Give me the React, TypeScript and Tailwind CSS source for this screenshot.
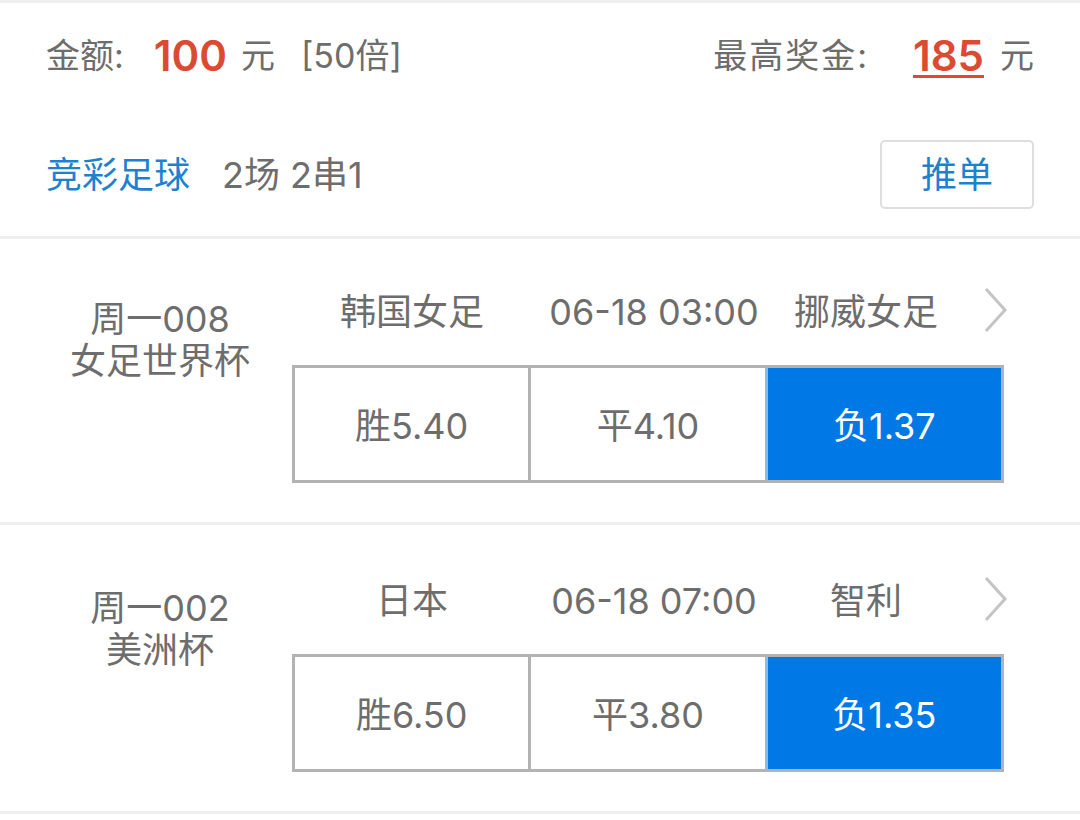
import React from "react";

const FONT = { fontFamily: '"Inter", "Noto Sans CJK SC", sans-serif' };

function Chevron() {
  return (
    <svg width="28" height="48" viewBox="0 0 28 48" className="block">
      <polyline points="4,3 23,24 4,45" fill="none" stroke="#c4c4c4" strokeWidth="3" />
    </svg>
  );
}

type Match = {
  code: string;
  league: string;
  home: string;
  time: string;
  away: string;
  odds: [string, string, string];
};

const matches: Match[] = [
  { code: "周一008", league: "女足世界杯", home: "韩国女足", time: "06-18 03:00", away: "挪威女足", odds: ["胜5.40", "平4.10", "负1.37"] },
  { code: "周一002", league: "美洲杯", home: "日本", time: "06-18 07:00", away: "智利", odds: ["胜6.50", "平3.80", "负1.35"] },
];

function MatchRow({ m, second }: { m: Match; second?: boolean }) {
  return (
    <div className={second ? "flex h-[286px] pt-[3px]" : "flex h-[283px]"}>
      <div className="w-[292px] pl-[28px] pt-[59px] text-center text-[36px] leading-[42px] text-[#6d6d6d]">
        <div>{m.code}</div>
        <div>{m.league}</div>
      </div>
      <div className="flex flex-col pt-[48px]">
        <div className="flex h-[50px] items-center text-[36px] text-[#6d6d6d]">
          <div className="w-[240px] text-center">{m.home}</div>
          <div className="w-[244px] text-center">{m.time}</div>
          <div className="w-[180px] text-center">{m.away}</div>
          <div className="ml-[26px] -mt-[4px]">
            <Chevron />
          </div>
        </div>
        <div className="mt-[28px] flex h-[118px] w-[712px] border-[3px] border-[#b3b3b3]">
          <div className="flex flex-1 items-center justify-center pt-[3px] text-[36px] text-[#6d6d6d]">{m.odds[0]}</div>
          <div className="flex flex-1 items-center justify-center border-l-[3px] border-[#b3b3b3] pt-[3px] text-[36px] text-[#6d6d6d]">{m.odds[1]}</div>
          <div className="flex flex-1 items-center justify-center border-l-[3px] border-[#8fb9e3] bg-[#0079e6] pt-[3px] text-[36px] text-white">{m.odds[2]}</div>
        </div>
      </div>
    </div>
  );
}

export default function App() {
  return (
    <div className="h-[820px] w-[1080px] overflow-hidden bg-white" style={FONT}>
      <div className="h-[3px] bg-[#efefef]" />
      <div className="px-[46px]">
        <div className="flex h-[110px] items-center justify-between pb-[6px] text-[34px] text-[#6d6d6d]">
          <div className="flex items-center">
            <span>金额:</span>
            <span className="ml-[30px] text-[42px] font-semibold text-[#dd4a34]">100</span>
            <span className="ml-[14px]">元</span>
            <span className="ml-[26px]">[50倍]</span>
          </div>
          <div className="flex items-center">
            <span className="tracking-[2px]">最高奖金:</span>
            <span className="ml-[44px] text-[42px] font-semibold text-[#dd4a34] underline decoration-[3px] underline-offset-[4px]">185</span>
            <span className="ml-[16px]">元</span>
          </div>
        </div>
        <div className="flex h-[123px] items-center justify-between">
          <div className="flex items-center text-[36px]">
            <span className="text-[#1c82cf]">竞彩足球</span>
            <span className="ml-[32px] text-[#6d6d6d]">2场 2串1</span>
          </div>
          <div className="flex h-[69px] w-[154px] items-center justify-center rounded-[5px] border-2 border-[#dedede] text-[36px] text-[#1c82cf]">
            推单
          </div>
        </div>
      </div>
      <div className="h-[3px] bg-[#efefef]" />
      <MatchRow m={matches[0]} />
      <div className="h-[3px] bg-[#efefef]" />
      <MatchRow m={matches[1]} second />
      <div className="h-[3px] bg-[#efefef]" />
    </div>
  );
}
